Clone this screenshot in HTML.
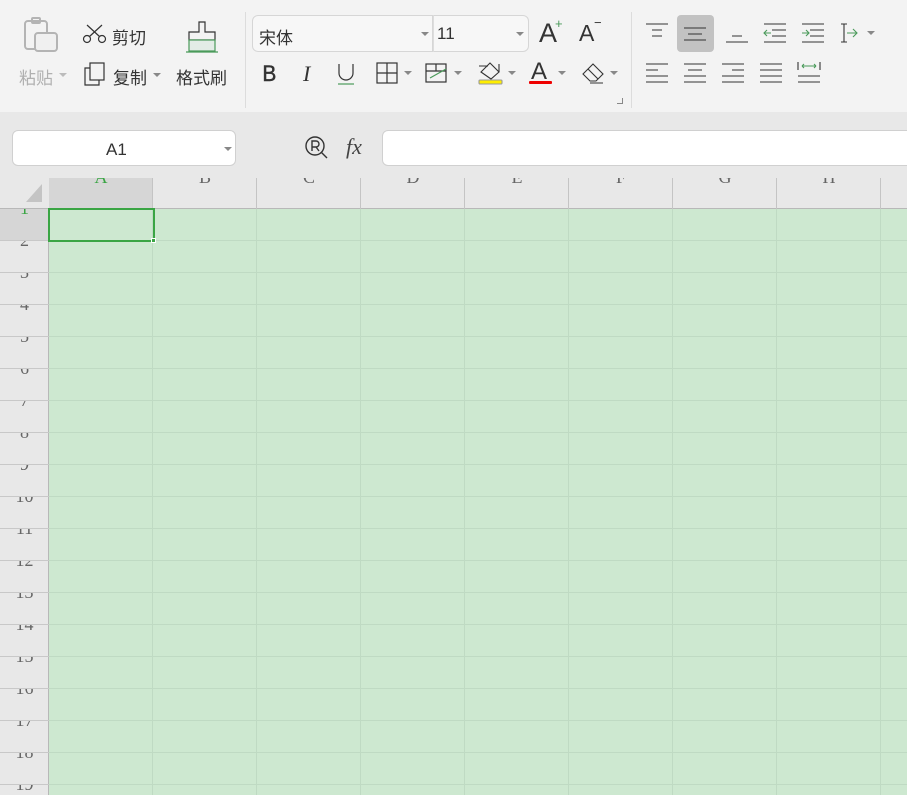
<!DOCTYPE html>
<html><head><meta charset="utf-8"><style>
*{margin:0;padding:0;box-sizing:border-box}
html,body{width:907px;height:795px;overflow:hidden}
body{background:#e8e8e8;font-family:"Liberation Sans","Noto Sans CJK SC",sans-serif;position:relative}
.a{position:absolute}
.tb{left:0;top:0;width:907px;height:112px;background:#f3f3f3}
.cn{font-size:17px;color:#333;white-space:nowrap}
.dd{width:0;height:0;border-left:4px solid transparent;border-right:4px solid transparent;border-top:4px solid #888}
.sep{width:1px;background:#dcdcdc}
.rl{left:0;width:49px;height:32px;overflow:hidden;border-bottom:1px solid #c8c8c8}
.rl span{position:absolute;left:0;width:49px;text-align:center;top:-11px;font:18px "Liberation Serif",serif;color:#666}
.cl{top:178px;width:104px;height:31px;overflow:hidden;border-right:1px solid #c4c4c4}
.cl span{position:absolute;left:0;width:104px;text-align:center;top:-11px;font:18px "Liberation Serif",serif;color:#666}
</style></head><body>
<div class="a tb"></div>
<svg class="a" style="left:22px;top:16px" width="40" height="40" viewBox="0 0 40 40" fill="none" stroke="#b4b4b4" stroke-width="2"><rect x="3" y="5" width="22" height="28" rx="3"/><rect x="10" y="2" width="8" height="5" rx="1"/><rect x="13" y="17" width="22" height="18" rx="3" fill="#f0f0f0"/></svg>
<div class="a cn" style="left:19px;top:64px;color:#b0b0b0">粘贴</div><div class="a dd" style="left:59px;top:73px;border-top-color:#bbb"></div>
<svg class="a" style="left:82px;top:24px" width="26" height="20" viewBox="0 0 26 20" fill="none" stroke="#333" stroke-width="1.2"><circle cx="5" cy="15" r="3.5"/><circle cx="20" cy="15" r="3.5"/><path d="M7.5 12.5L20 1M17.5 12.5L5 1"/></svg>
<div class="a cn" style="left:112px;top:24px">剪切</div>
<svg class="a" style="left:84px;top:62px" width="22" height="24" viewBox="0 0 22 24" fill="none" stroke="#333" stroke-width="1.2"><rect x="6" y="1" width="14" height="17"/><path d="M6 6H1v17h14v-5"/></svg>
<div class="a cn" style="left:113px;top:64px">复制</div><div class="a dd" style="left:153px;top:73px"></div>
<svg class="a" style="left:185px;top:20px" width="34" height="34" viewBox="0 0 34 34" fill="none" stroke="#333" stroke-width="1.2"><path d="M14 2h6v10h10v8H4v-8h10z"/><rect x="4" y="20" width="26" height="11" fill="#e3ece6" stroke="#4a9a5a"/><path d="M1 32h32" stroke="#4a9a5a"/></svg>
<div class="a cn" style="left:176px;top:64px">格式刷</div>
<div class="a sep" style="left:245px;top:12px;height:96px"></div>
<div class="a" style="left:252px;top:15px;width:181px;height:37px;border:1px solid #d6d6d6;border-radius:6px 0 0 6px;background:#f7f7f7"></div>
<div class="a cn" style="left:259px;top:24px;font-size:17px">宋体</div><div class="a dd" style="left:421px;top:32px"></div>
<div class="a" style="left:433px;top:15px;width:96px;height:37px;border:1px solid #d6d6d6;border-left:1px solid #ddd;border-radius:0 6px 6px 0;background:#f7f7f7"></div>
<div class="a cn" style="left:437px;top:24px">11</div><div class="a dd" style="left:516px;top:32px"></div>
<div class="a" style="left:539px;top:18px;font-size:27px;color:#333;font-weight:300">A</div><div class="a" style="left:555px;top:16px;font-size:13px;color:#4a9a5a">+</div>
<div class="a" style="left:579px;top:20px;font-size:23px;color:#333">A</div><div class="a" style="left:594px;top:15px;font-size:13px;color:#333">−</div>
<div class="a" style="left:262px;top:61px;font-size:22px;color:#333;transform:scaleX(.95);-webkit-text-stroke:0.5px #333">B</div>
<div class="a" style="left:303px;top:61px;font:italic 22px 'Liberation Serif',serif;color:#333">I</div>
<svg class="a" style="left:337px;top:62px" width="18" height="24" viewBox="0 0 18 24" fill="none" stroke="#333" stroke-width="1.2"><path d="M2 2v9a7 7 0 0 0 14 0V2"/><path d="M1 22h16" stroke="#4a9a5a"/></svg>
<svg class="a" style="left:376px;top:62px" width="22" height="22" viewBox="0 0 22 22" fill="none" stroke="#333" stroke-width="1.2"><rect x="1" y="1" width="20" height="20"/><path d="M11 1v20M1 11h20"/></svg><div class="a dd" style="left:404px;top:71px"></div>
<svg class="a" style="left:425px;top:63px" width="24" height="20" viewBox="0 0 24 20" fill="none" stroke="#333" stroke-width="1.2"><rect x="1" y="1" width="20" height="18"/><path d="M1 8h20M11 1v7"/><path d="M5 15L21 6" stroke="#4a9a5a"/></svg><div class="a dd" style="left:454px;top:71px"></div>
<svg class="a" style="left:477px;top:60px" width="28" height="26" viewBox="0 0 28 26" fill="none" stroke="#333" stroke-width="1.1"><path d="M4 12l9-9 9 9-8 7z"/><path d="M2 6h9M22 4v8"/><rect x="2" y="20" width="23" height="4" rx="1" fill="#ffee00" stroke="#999"/></svg><div class="a dd" style="left:508px;top:71px"></div>
<div class="a" style="left:531px;top:58px;font-size:24px;color:#333;font-weight:300">A</div><div class="a" style="left:529px;top:81px;width:23px;height:3px;background:#e00;border-radius:1px"></div><div class="a dd" style="left:558px;top:71px"></div>
<svg class="a" style="left:581px;top:61px" width="26" height="24" viewBox="0 0 26 24" fill="none" stroke="#333" stroke-width="1.1"><path d="M2 13L12 3l10 10-7 7H9z"/><path d="M7 8l10 10M9 22h13"/></svg><div class="a dd" style="left:610px;top:71px"></div>
<div class="a" style="left:617px;top:98px;width:6px;height:6px;border-right:1px solid #888;border-bottom:1px solid #888"></div>
<div class="a sep" style="left:631px;top:12px;height:96px"></div>
<div class="a" style="left:677px;top:15px;width:37px;height:37px;background:#c2c2c2;border-radius:4px"></div>
<svg class="a" style="left:640px;top:14px" width="260" height="80" viewBox="0 0 260 80" fill="none" stroke="#333" stroke-width="1.1">
<path d="M6 10h22M12 16h10M12 22h10"/>
<path d="M44 14h22M48 20h14M44 26h22"/>
<path d="M86 28h22M92 22h10"/>
<path d="M124 10h22M132 16h14M132 22h14M124 28h22"/><path d="M131 19h-7m3-3l-3 3 3 3" stroke="#4a9a5a"/>
<path d="M162 10h22M170 16h14M170 22h14M162 28h22"/><path d="M162 19h7m-3-3l3 3-3 3" stroke="#4a9a5a"/>
<path d="M201 10h6M201 28h6M204 10v18"/><path d="M207 19h10m-4-4l4 4-4 4" stroke="#4a9a5a"/>
<path d="M6 50h22M6 56h12M6 62h22M6 68h22"/>
<path d="M44 50h22M48 56h14M44 62h22M44 68h22"/>
<path d="M82 50h22M92 56h12M82 62h22M82 68h22"/>
<path d="M120 50h22M120 56h22M120 62h22M120 68h22"/>
<path d="M158 48v8M180 48v8M158 62h22M158 68h22"/><path d="M162 52h14M162 52l2-2m-2 2l2 2M176 52l-2-2m2 2l-2 2" stroke="#4a9a5a"/>
</svg>
<div class="a dd" style="left:867px;top:31px"></div>
<div class="a" style="left:12px;top:130px;width:224px;height:36px;background:#fff;border:1px solid #d0d0d0;border-radius:6px"></div>
<div class="a" style="left:106px;top:140px;font-size:17px;color:#333">A1</div><div class="a dd" style="left:224px;top:147px"></div>
<svg class="a" style="left:304px;top:135px" width="26" height="26" viewBox="0 0 26 26" fill="none" stroke="#333" stroke-width="1.4"><circle cx="11" cy="11" r="9"/><path d="M17 17l6 6"/><path d="M8 16V6h4a3 3 0 0 1 0 6H8m4 0l3 4"/></svg>
<div class="a" style="left:346px;top:134px;font:italic 22px 'Liberation Serif',serif;color:#444">fx</div>
<div class="a" style="left:382px;top:130px;width:540px;height:36px;background:#fff;border:1px solid #d0d0d0;border-radius:6px 0 0 6px"></div>
<div class="a" style="left:49px;top:209px;width:858px;height:586px;background-color:#cde8d0;background-image:repeating-linear-gradient(to bottom,transparent 0 31px,#bfdac3 31px 32px),repeating-linear-gradient(to right,transparent 0 103px,#bfdac3 103px 104px)"></div>
<div class="a" style="left:0;top:178px;width:907px;height:31px;background:#e8e8e8;border-bottom:1px solid #b8b8b8"></div>
<div class="a" style="left:49px;top:178px;width:104px;height:31px;background:#d6d6d6"></div>
<svg class="a" style="left:26px;top:184px" width="16" height="18"><path d="M16 0V18H0z" fill="#c4c4c4"/></svg>
<div class="a cl" style="left:49px"><span style="color:#3aa544">A</span></div>
<div class="a cl" style="left:153px"><span>B</span></div>
<div class="a cl" style="left:257px"><span>C</span></div>
<div class="a cl" style="left:361px"><span>D</span></div>
<div class="a cl" style="left:465px"><span>E</span></div>
<div class="a cl" style="left:569px"><span>F</span></div>
<div class="a cl" style="left:673px"><span>G</span></div>
<div class="a cl" style="left:777px"><span>H</span></div>
<div class="a cl" style="left:881px"><span>I</span></div>
<div class="a" style="left:0;top:209px;width:49px;height:586px;background:#e8e8e8;border-right:1px solid #b8b8b8"></div>
<div class="a rl" style="top:209px;background:#d6d6d6"><span style="color:#3aa544">1</span></div>
<div class="a rl" style="top:241px"><span>2</span></div>
<div class="a rl" style="top:273px"><span>3</span></div>
<div class="a rl" style="top:305px"><span>4</span></div>
<div class="a rl" style="top:337px"><span>5</span></div>
<div class="a rl" style="top:369px"><span>6</span></div>
<div class="a rl" style="top:401px"><span>7</span></div>
<div class="a rl" style="top:433px"><span>8</span></div>
<div class="a rl" style="top:465px"><span>9</span></div>
<div class="a rl" style="top:497px"><span>10</span></div>
<div class="a rl" style="top:529px"><span>11</span></div>
<div class="a rl" style="top:561px"><span>12</span></div>
<div class="a rl" style="top:593px"><span>13</span></div>
<div class="a rl" style="top:625px"><span>14</span></div>
<div class="a rl" style="top:657px"><span>15</span></div>
<div class="a rl" style="top:689px"><span>16</span></div>
<div class="a rl" style="top:721px"><span>17</span></div>
<div class="a rl" style="top:753px"><span>18</span></div>
<div class="a rl" style="top:785px;height:10px;border-bottom:none"><span>19</span></div>
<div class="a" style="left:48px;top:208px;width:107px;height:34px;border:2px solid #3aa544"></div>
<div class="a" style="left:151px;top:238px;width:5px;height:5px;background:#3aa544;border:1px solid #fff"></div>
</body></html>
